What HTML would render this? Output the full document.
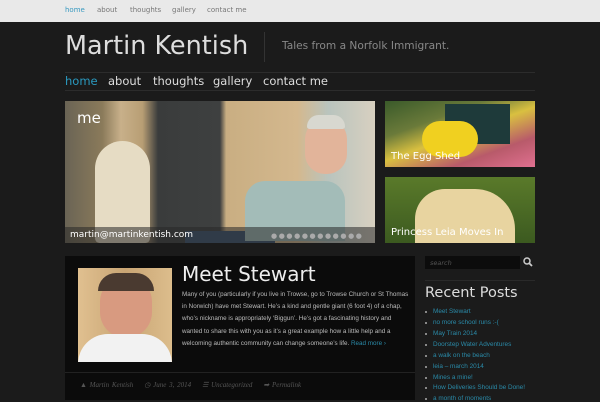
<!DOCTYPE html>
<html><head><meta charset="utf-8"><style>
*{margin:0;padding:0;box-sizing:border-box}
body{width:600px;height:400px;overflow:hidden;background:#1b1b1b;font-family:"DejaVu Sans","Liberation Sans",sans-serif;position:relative}
.a{position:absolute;white-space:nowrap}
.top{left:0;top:0;width:600px;height:22px;background:#e9e9e9}
.top span{position:absolute;top:6px;font-size:7px;color:#777}
.nav span{position:absolute;top:74px;font-size:11.5px;color:#ddd}
.rp li{list-style:none;position:absolute;left:425px;font-size:6.4px;color:#2a8aa8;font-family:"Liberation Sans",sans-serif;white-space:nowrap}
.rp li:before{content:"";position:absolute;left:0;top:3px;width:2px;height:2px;background:#888}
.rp li span{margin-left:8px}
.txt{left:182px;top:289px;width:228px;font-size:6.3px;line-height:12.2px;color:#bbb;font-family:"Liberation Sans",sans-serif;white-space:normal}
</style></head><body>
<div class="a top">
<span style="left:65px;color:#3a9ac0">home</span><span style="left:97px">about</span><span style="left:130px">thoughts</span><span style="left:172px">gallery</span><span style="left:207px">contact me</span>
</div>
<div class="a" style="left:65px;top:31px;font-size:25.5px;color:#ddd">Martin Kentish</div>
<div class="a" style="left:264px;top:32px;width:1px;height:30px;background:#333"></div>
<div class="a" style="left:282px;top:40px;font-size:10.6px;color:#888">Tales from a Norfolk Immigrant.</div>
<div class="a" style="left:65px;top:72px;width:470px;height:1px;background:#2c2c2c"></div>
<div class="a" style="left:65px;top:90px;width:470px;height:1px;background:#2c2c2c"></div>
<div class="nav"><span style="left:65px;color:#2a9ac0">home</span><span style="left:108px">about</span><span style="left:153px">thoughts</span><span style="left:213px">gallery</span><span style="left:263px">contact me</span></div>

<div class="a" style="left:65px;top:101px;width:310px;height:142px;background:linear-gradient(90deg,#6a6455 0%,#8a7a5a 12%,#c8b08a 18%,#b89e74 25%,#3a3c3c 30%,#3e4040 50%,#c9ae82 52%,#d4b88e 75%,#b9c4be 85%,#d8d0c0 100%);overflow:hidden">
<div class="a" style="left:30px;top:40px;width:55px;height:102px;background:#e6dcc4;border-radius:30px 30px 5px 5px"></div>
<div class="a" style="left:120px;top:130px;width:90px;height:12px;background:#3b5270"></div>
<div class="a" style="left:180px;top:80px;width:100px;height:60px;background:#a3bcb8;border-radius:20px 20px 0 0"></div>
<div class="a" style="left:240px;top:18px;width:42px;height:55px;background:#e2b49a;border-radius:20px"></div>
<div class="a" style="left:242px;top:14px;width:38px;height:14px;background:#d8d8d0;border-radius:18px 18px 4px 4px"></div>
<div class="a" style="left:12px;top:8px;font-size:15px;color:#fff">me</div>
<div class="a" style="left:0;top:126px;width:310px;height:16px;background:rgba(40,40,40,.55)"></div>
<div class="a" style="left:5px;top:129px;font-size:9px;color:#fff">martin@martinkentish.com</div>
<div class="a" style="left:206px;top:131px;font-size:7px;letter-spacing:1.6px;color:#aaa">●●●●●●●●●●●●</div>
</div>
<div class="a" style="left:385px;top:101px;width:150px;height:66px;background:linear-gradient(160deg,#3a5a2a 0%,#6a7a3a 30%,#d9c040 50%,#b85a6a 75%,#e07090 100%);overflow:hidden">
<div class="a" style="left:60px;top:3px;width:65px;height:40px;background:#1e3a3a"></div>
<div class="a" style="left:37px;top:20px;width:56px;height:36px;background:#f0d020;border-radius:28px"></div>
<div class="a" style="left:6px;top:50px;font-size:10px;color:#fff">The Egg Shed</div></div>
<div class="a" style="left:385px;top:177px;width:150px;height:66px;background:linear-gradient(180deg,#5a7a2a,#3c5a20);overflow:hidden">
<div class="a" style="left:30px;top:12px;width:100px;height:54px;background:#e8d4a0;border-radius:30px 40px 0 0"></div>
<div class="a" style="left:6px;top:50px;font-size:10px;color:#fff">Princess Leia Moves In</div></div>

<div class="a" style="left:65px;top:256px;width:350px;height:144px;background:#0b0b0b"></div>
<div class="a" style="left:78px;top:268px;width:94px;height:94px;background:linear-gradient(90deg,#e0c090,#c9a574 50%,#dcbd8c);overflow:hidden">
<div class="a" style="left:22px;top:8px;width:52px;height:62px;background:#d89a80;border-radius:26px"></div>
<div class="a" style="left:20px;top:5px;width:56px;height:18px;background:#4a3a30;border-radius:26px 26px 0 0"></div>
<div class="a" style="left:0;top:66px;width:94px;height:30px;background:#f2f2f2;border-radius:30px 30px 0 0"></div></div>
<div class="a" style="left:182px;top:262px;font-size:20px;color:#eee">Meet Stewart</div>
<div class="a txt">Many of you (particularly if you live in Trowse, go to Trowse Church or St Thomas in Norwich) have met Stewart. He’s a kind and gentle giant (6 foot 4) of a chap, who’s nickname is appropriately ‘Biggun’. He’s got a fascinating history and wanted to share this with you as it’s a great example how a little help and a welcoming authentic community can change someone’s life. <span style="color:#2a8aa8">Read more ›</span></div>
<div class="a" style="left:65px;top:372px;width:350px;height:1px;background:#222"></div>
<div class="a" style="left:80px;top:381px;font-size:7px;color:#555;font-family:'Liberation Serif',serif;font-style:italic;word-spacing:1px">▲ Martin Kentish &nbsp;&nbsp; ◷ June 3, 2014 &nbsp;&nbsp; ☰ Uncategorized &nbsp;&nbsp; ➡ Permalink</div>

<div class="a" style="left:425px;top:256px;width:95px;height:13px;background:#0c0c0c;font-size:6.5px;color:#555;font-style:italic;padding:3px 5px">search</div>
<svg class="a" style="left:523px;top:257px" width="10" height="10"><circle cx="4" cy="4" r="3" stroke="#ccc" stroke-width="1.5" fill="none"/><line x1="6" y1="6" x2="9" y2="9" stroke="#ccc" stroke-width="1.8"/></svg>
<div class="a" style="left:425px;top:280px;width:110px;height:1px;background:#2a2a2a"></div>
<div class="a" style="left:425px;top:285px;font-size:14.5px;color:#ddd">Recent Posts</div>
<ul class="rp">
<li style="top:308px"><span>Meet Stewart</span></li>
<li style="top:319px"><span>no more school runs :-(</span></li>
<li style="top:330px"><span>May Train 2014</span></li>
<li style="top:341px"><span>Doorstep Water Adventures</span></li>
<li style="top:352px"><span>a walk on the beach</span></li>
<li style="top:363px"><span>leia – march 2014</span></li>
<li style="top:374px"><span>Mines a mine!</span></li>
<li style="top:384px"><span>How Deliveries Should be Done!</span></li>
<li style="top:395px"><span>a month of moments</span></li>
</ul>
</body></html>
